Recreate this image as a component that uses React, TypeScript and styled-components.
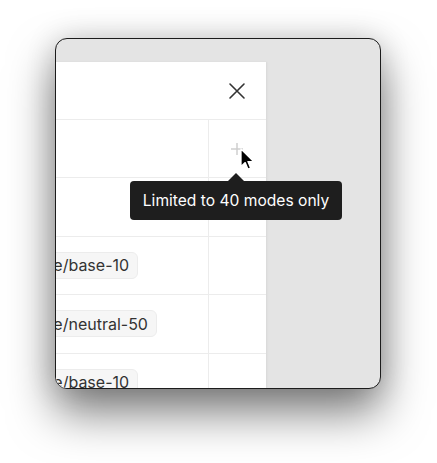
import React, { FC } from 'react';
import styled, { createGlobalStyle } from 'styled-components';

const GlobalStyle = createGlobalStyle`
  html, body {
    margin: 0;
    padding: 0;
    background: #ffffff;
    font-family: Inter, 'Liberation Sans', sans-serif;
  }
`;

const rows = ['Palette/base-10', 'Palette/neutral-50', 'Palette/base-10'];

const CloseIcon: FC = () => (
  <svg width="18" height="18" viewBox="0 0 18 18" fill="none">
    <path d="M2 2L16 16M16 2L2 16" stroke="#333" strokeWidth="1.6" strokeLinecap="round" />
  </svg>
);

const PlusIcon: FC = () => (
  <svg width="14" height="14" viewBox="0 0 14 14" fill="none">
    <path d="M7 1V13M1 7H13" stroke="#cfcfcf" strokeWidth="1.5" />
  </svg>
);

const Cursor: FC = () => (
  <svg width="16" height="24" viewBox="0 0 16 24">
    <path
      d="M1 1V18.5L5.2 14.6L8 21.2L10.6 20.1L7.9 13.6H13.6Z"
      fill="#000"
      stroke="#fff"
      strokeWidth="1.3"
      strokeLinejoin="round"
    />
  </svg>
);

const App: FC = () => (
  <>
    <GlobalStyle />
    <Page>
      <Window>
        <Panel>
          <Header>
            <CloseButton type="button">
              <CloseIcon />
            </CloseButton>
          </Header>
          <Row>
            <NameCell />
            <ActionCell>
              <PlusIcon />
            </ActionCell>
          </Row>
          <Row>
            <NameCell />
            <ActionCell />
          </Row>
          {rows.map((name, i) => (
            // eslint-disable-next-line react/no-array-index-key
            <Row key={i}>
              <NameCell>
                <Chip>{name}</Chip>
              </NameCell>
              <ActionCell />
            </Row>
          ))}
        </Panel>
        <Overlay>
          <PointerWrap>
            <Cursor />
          </PointerWrap>
          <Tooltip>Limited to 40 modes only</Tooltip>
        </Overlay>
      </Window>
    </Page>
  </>
);

export default App;

const Page = styled.div`
  width: 437px;
  height: 463px;
  padding: 38px 0 0 55px;
  box-sizing: border-box;
`;

const Window = styled.div`
  position: relative;
  width: 326px;
  height: 351px;
  box-sizing: border-box;
  border: 1px solid #1c1c1c;
  border-radius: 12px;
  background: #e4e4e4;
  overflow: hidden;
  display: flex;
  justify-content: flex-end;
  padding: 23px 114px 0 0;
  box-shadow: 0 24px 46px rgba(0, 0, 0, 0.5), 0 0 30px rgba(0, 0, 0, 0.16);
`;

const Panel = styled.div`
  flex-shrink: 0;
  width: 274px;
  background: #ffffff;
  box-shadow: 1px 0 2px rgba(0, 0, 0, 0.06);
`;

const Header = styled.div`
  height: 58px;
  box-sizing: border-box;
  border-bottom: 1px solid #ececec;
  display: flex;
  justify-content: flex-end;
  align-items: center;
  padding-right: 20px;
`;

const CloseButton = styled.button`
  border: 0;
  padding: 0;
  background: none;
  display: flex;
`;

const Row = styled.div`
  height: 58.4px;
  box-sizing: border-box;
  border-bottom: 1px solid #ececec;
  display: grid;
  grid-template-columns: 1fr 58px;
`;

const NameCell = styled.div`
  display: flex;
  align-items: center;
  padding-left: 10px;
`;

const ActionCell = styled.div`
  border-left: 1px solid #ececec;
  display: flex;
  align-items: center;
  justify-content: center;
  padding-right: 2px;
`;

const Chip = styled.span`
  height: 27px;
  box-sizing: border-box;
  display: inline-flex;
  align-items: center;
  padding: 0 8px;
  border: 1px solid #ececec;
  border-radius: 6px;
  background: #f6f6f6;
  color: #333333;
  font-size: 16px;
  white-space: nowrap;
`;

const Overlay = styled.div`
  position: absolute;
  left: 0;
  top: 0;
`;

const PointerWrap = styled.div`
  position: absolute;
  left: 184px;
  top: 109px;
  z-index: 2;
`;

const Tooltip = styled.div`
  position: absolute;
  left: 74px;
  top: 142px;
  width: 212px;
  height: 39px;
  box-sizing: border-box;
  background: #1e1e1e;
  border-radius: 4px;
  color: #ffffff;
  font-size: 15.6px;
  display: flex;
  align-items: center;
  justify-content: center;
  white-space: nowrap;

  &::before {
    content: '';
    position: absolute;
    top: -8px;
    left: 50%;
    margin-left: -8px;
    border-left: 8px solid transparent;
    border-right: 8px solid transparent;
    border-bottom: 8px solid #1e1e1e;
  }
`;
